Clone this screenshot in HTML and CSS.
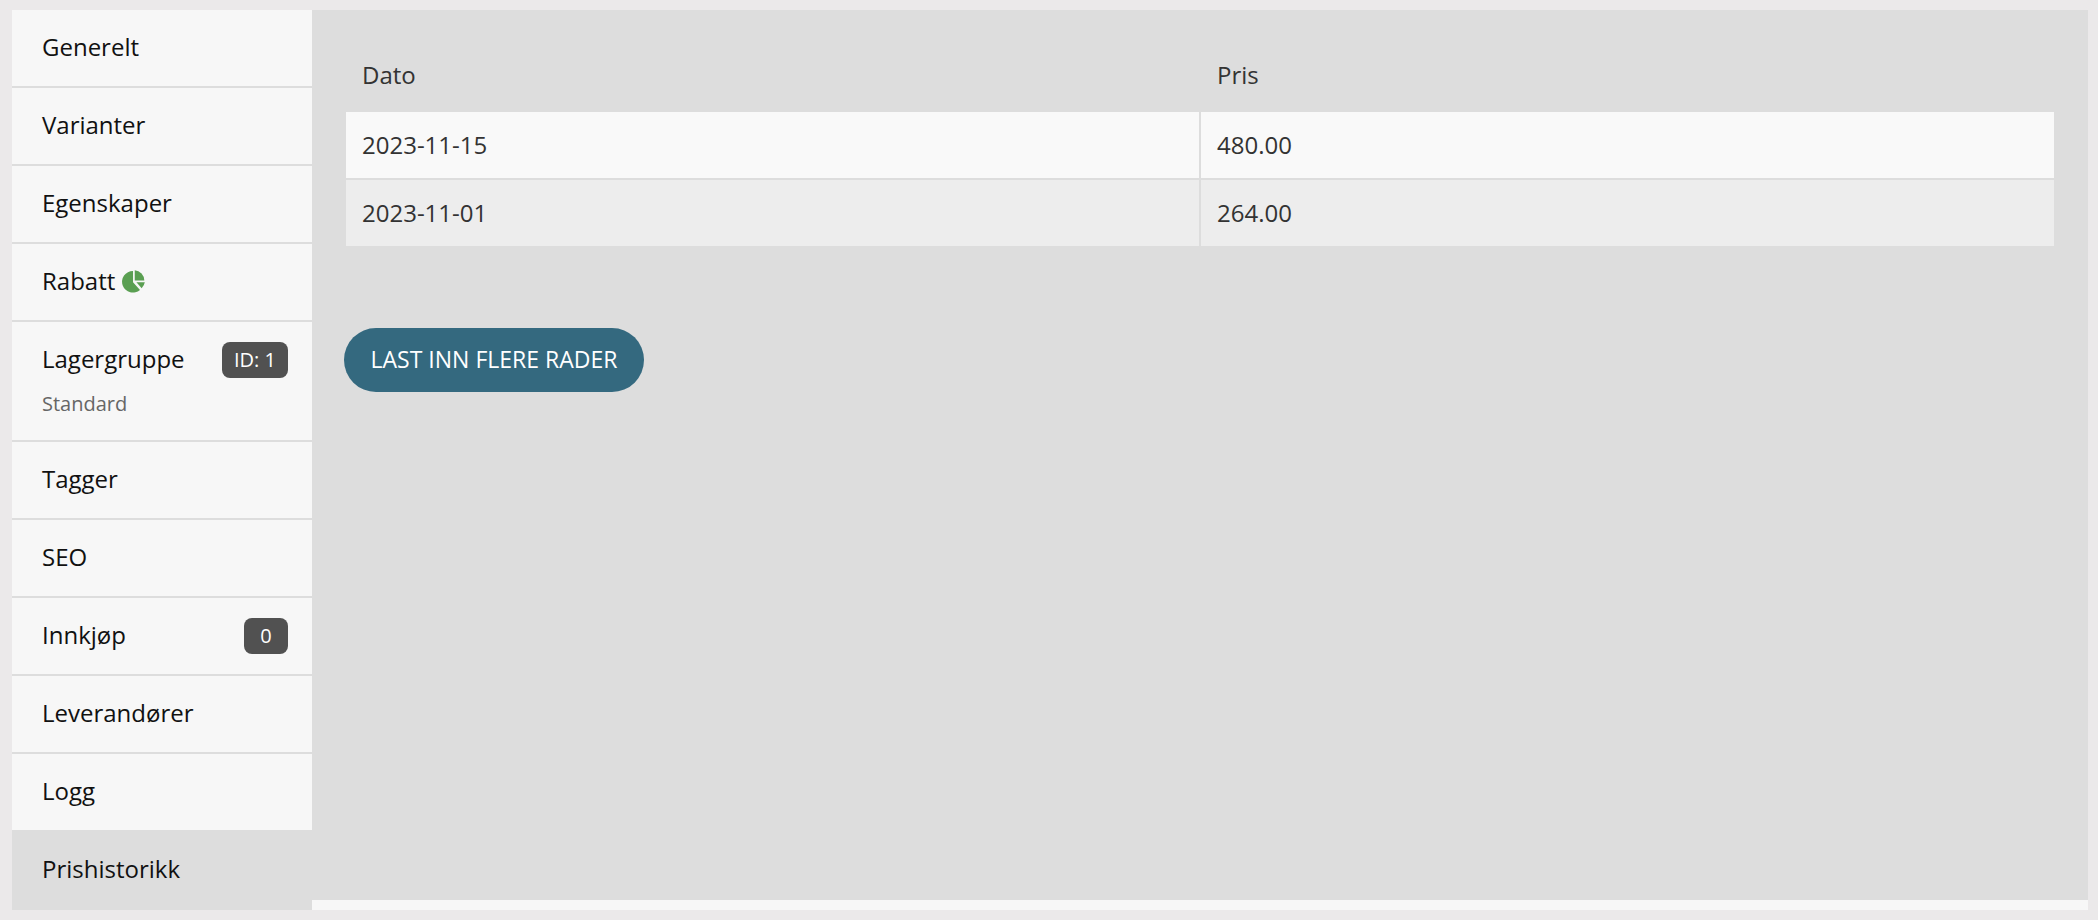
FILE: index.html
```html
<!DOCTYPE html>
<html lang="nb">
<head>
<meta charset="utf-8">
<title>Prishistorikk</title>
<link rel="stylesheet" href="styles.css">
</head>
<body>
<div class="panel">
  <nav class="tabs">
    <a class="tab" href="#generelt">Generelt</a>
    <a class="tab" href="#varianter">Varianter</a>
    <a class="tab" href="#egenskaper">Egenskaper</a>
    <a class="tab" href="#rabatt">Rabatt
      <svg class="pie" viewBox="0 0 24 24" aria-hidden="true">
        <path d="M11.5 1V12.8L18.8 20.8A11.3 11.3 0 1 1 11.5 1Z"/>
        <path d="M13.3 0.3A10.9 10.9 0 0 1 23.3 11H13.3Z"/>
        <path d="M15 12.8H23.8A11 11 0 0 1 20.5 19Z"/>
      </svg>
    </a>
    <a class="tab tab-tall" href="#lagergruppe">
      <span class="tab-row">Lagergruppe <span class="badge">ID: 1</span></span>
      <span class="tab-note">Standard</span>
    </a>
    <a class="tab" href="#tagger">Tagger</a>
    <a class="tab" href="#seo">SEO</a>
    <a class="tab" href="#innkjop"><span class="tab-row">Innkjøp <span class="badge">0</span></span></a>
    <a class="tab" href="#leverandorer">Leverandører</a>
    <a class="tab" href="#logg">Logg</a>
    <a class="tab tab-active" href="#prishistorikk" aria-current="page">Prishistorikk</a>
  </nav>
  <main class="content">
    <table class="prices">
      <thead>
        <tr><th scope="col">Dato</th><th scope="col">Pris</th></tr>
      </thead>
      <tbody>
        <tr><td>2023-11-15</td><td>480.00</td></tr>
        <tr><td>2023-11-01</td><td>264.00</td></tr>
      </tbody>
    </table>
    <button class="load-more" type="button">LAST INN FLERE RADER</button>
  </main>
</div>
</body>
</html>
```
FILE: styles.css
```css
* {
  box-sizing: border-box;
}

body {
  margin: 0;
  padding: 10px 10px 10px 12px;
  background: #ebe9ea;
  color: #333;
  font: 24px/34px "Open Sans", "Noto Sans", sans-serif;
}

.panel {
  display: flex;
  background: #f7f7f7;
}

.tabs {
  flex: 0 0 300px;
  display: flex;
  flex-direction: column;
}

.tab {
  display: block;
  padding: 20px 24px 22px 30px;
  border-bottom: 2px solid #ddd;
  color: #111;
  text-decoration: none;
}

.tab-tall {
  padding-bottom: 20px;
}

.tab-active {
  background: #ddd;
}

.tab-row {
  display: flex;
  align-items: flex-start;
  justify-content: space-between;
}

.tab-note {
  display: block;
  padding-top: 12px;
  color: #666;
  font-size: 20px;
  line-height: 32px;
}

.badge {
  min-width: 44px;
  margin-bottom: -2px;
  padding: 0 12px;
  border-radius: 8px;
  background: #515151;
  color: #fff;
  font-size: 20px;
  font-weight: 500;
  line-height: 36px;
  text-align: center;
}

.pie {
  width: 23px;
  height: 23px;
  vertical-align: -3px;
  fill: #5a9f52;
}

.content {
  flex: 1;
  margin-bottom: 10px;
  padding: 32px;
  background: #ddd;
}

.prices {
  width: 100%;
  border-spacing: 2px;
  table-layout: fixed;
}

.prices th,
.prices td {
  padding: 16px;
  font-weight: 400;
  text-align: left;
}

.prices th {
  padding: 14px 16px 18px;
}

.prices td {
  background: #ededed;
}

.prices tbody tr:nth-child(odd) td {
  background: #f9f9f9;
}

.load-more {
  min-width: 300px;
  margin-top: 80px;
  padding: 14px 26px 16px;
  border: 0;
  border-radius: 32px;
  background: #34697f;
  color: #fff;
  font: 500 23px/34px "Open Sans", "Noto Sans", sans-serif;
}
```
